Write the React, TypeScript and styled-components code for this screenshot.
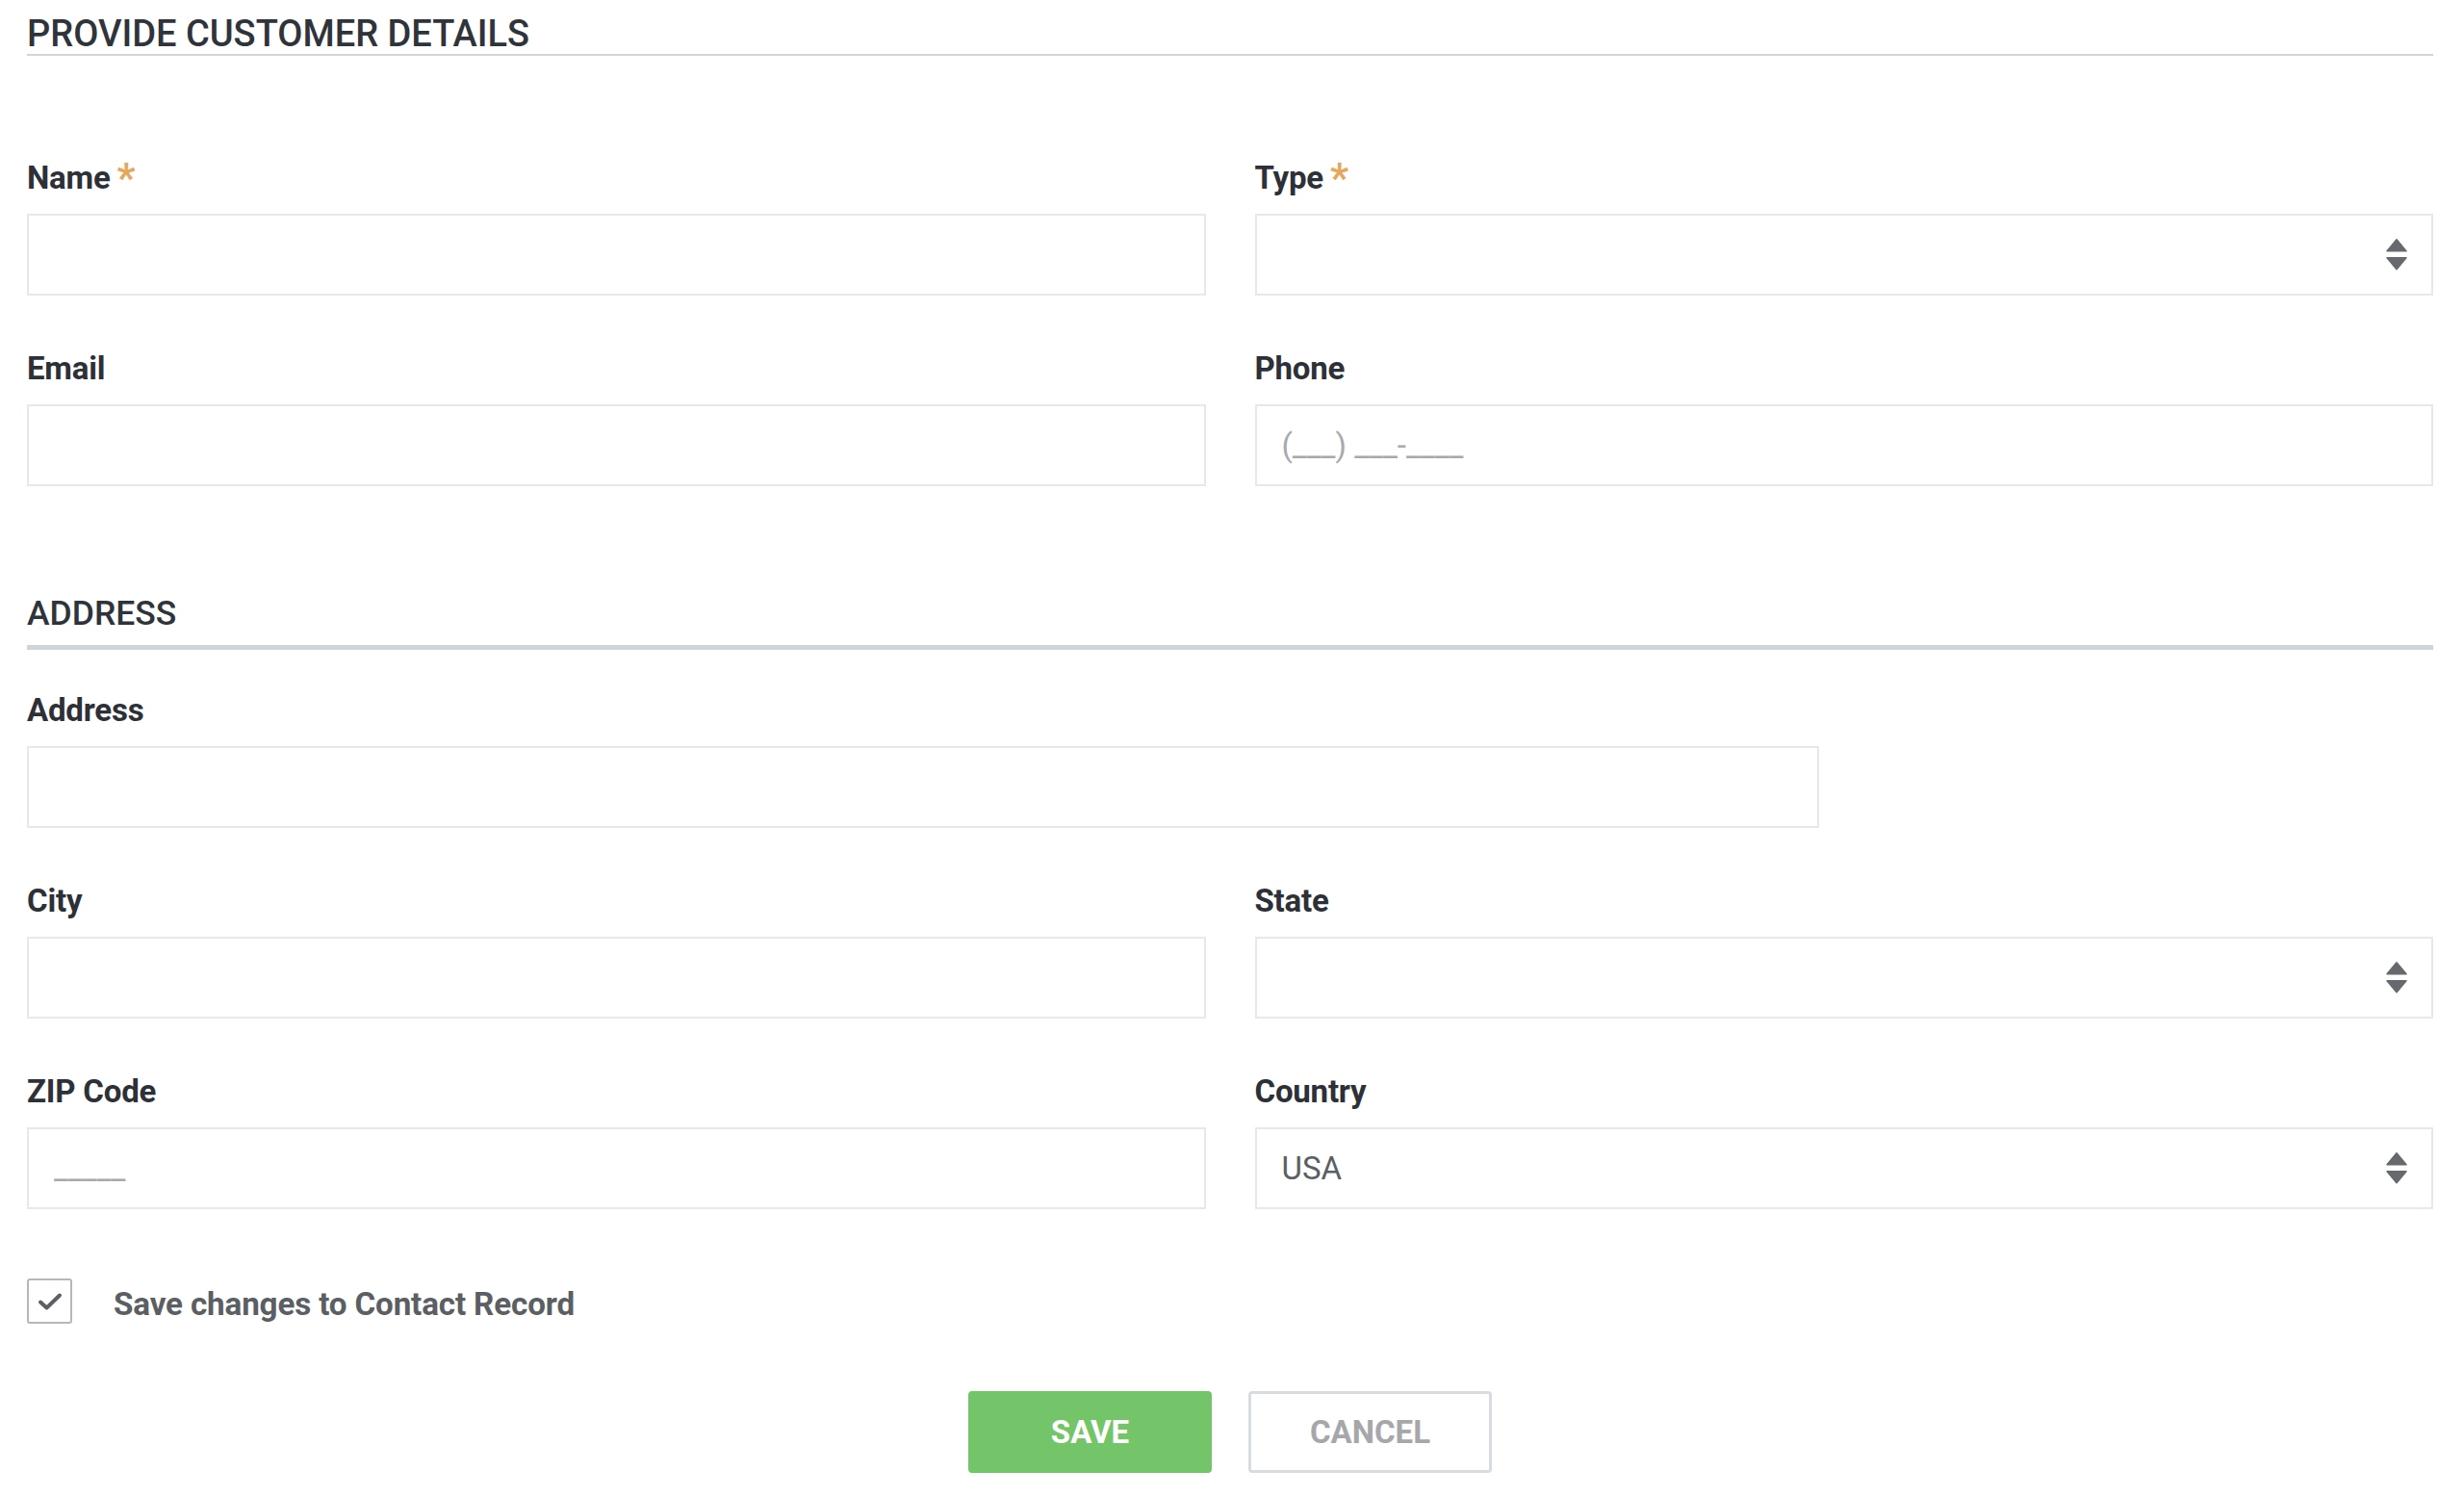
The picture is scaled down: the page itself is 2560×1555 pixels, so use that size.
import React, { useState } from 'react';
import styled, { createGlobalStyle } from 'styled-components';

const GlobalStyle = createGlobalStyle`
    html, body {
        margin: 0;
        padding: 0;
        background: #ffffff;
    }
    body {
        font-family: Roboto, "Liberation Sans", Arial, sans-serif;
        color: #2d3137;
    }
    * {
        box-sizing: border-box;
    }
`;

const Page = styled.div`
    padding: 14px 32px 24px 28px;
`;

const SectionTitle = styled.h2<{ $thick?: boolean; $top?: number }>`
    margin: ${(p) => p.$top || 0}px 0 0 0;
    font-size: ${(p) => (p.$thick ? '35.5px' : '38px')};
    font-weight: 500;
    line-height: 42px;
    color: #2f333a;
    text-transform: uppercase;
    padding-bottom: ${(p) => (p.$thick ? '12px' : '0')};
    border-bottom: ${(p) => (p.$thick ? '5px solid #cdd5db' : '2px solid #d0d7dc')};
`;

const FieldGrid = styled.div<{ $top: number }>`
    display: grid;
    grid-template-columns: repeat(12, 1fr);
    column-gap: 51px;
    row-gap: 56px;
    margin-top: ${(p) => p.$top}px;
`;

const Field = styled.div<{ $span: number }>`
    grid-column: span ${(p) => p.$span};
    display: flex;
    flex-direction: column;
`;

const Label = styled.label`
    font-size: 33px;
    font-weight: 700;
    line-height: 40px;
    color: #2d3137;
    margin-bottom: 17px;
    letter-spacing: -0.2px;
`;

const Required = styled.span`
    color: #e6a75c;
    margin-left: 7px;
    font-size: 42px;
    font-weight: 700;
    line-height: 0;
    position: relative;
    top: 3px;
`;

const TextInput = styled.input`
    height: 85px;
    width: 100%;
    border: 2px solid #e4e9ec;
    border-radius: 0;
    padding: 0 26px;
    font-family: Roboto, "Liberation Sans", Arial, sans-serif;
    font-size: 33px;
    color: #5b5f64;
    outline: none;
    background: #fff;

    &::placeholder {
        color: #a6a9ad;
    }
`;

const SelectWrap = styled.div`
    position: relative;
`;

const Select = styled.select`
    appearance: none;
    -webkit-appearance: none;
    height: 85px;
    width: 100%;
    border: 2px solid #e4e9ec;
    border-radius: 0;
    padding: 0 60px 0 26px;
    font-family: Roboto, "Liberation Sans", Arial, sans-serif;
    font-size: 33px;
    color: #5b5f64;
    background: #fff;
    outline: none;
`;

const Arrows = styled.svg`
    position: absolute;
    right: 27px;
    top: 50%;
    transform: translateY(-52%);
    pointer-events: none;
`;

const CheckRow = styled.label`
    display: flex;
    align-items: center;
    gap: 43px;
    margin-top: 72px;
    cursor: pointer;
`;

const CheckBox = styled.span<{ $checked: boolean }>`
    width: 47px;
    height: 47px;
    border: 2px solid #b4b8bc;
    border-radius: 3px;
    display: flex;
    align-items: center;
    justify-content: center;
    background: #fff;

    svg {
        visibility: ${(p) => (p.$checked ? 'visible' : 'hidden')};
    }
`;

const CheckText = styled.span`
    font-size: 33.2px;
    font-weight: 700;
    color: #5b5f64;
    letter-spacing: -0.15px;
    position: relative;
    top: 3px;
`;

const ButtonRow = styled.div`
    display: flex;
    justify-content: center;
    gap: 38px;
    margin-top: 70px;
`;

const Button = styled.button<{ $primary?: boolean }>`
    width: 253px;
    height: 85px;
    border-radius: 4px;
    font-family: Roboto, "Liberation Sans", Arial, sans-serif;
    font-size: 33px;
    font-weight: 700;
    text-transform: uppercase;
    cursor: pointer;
    background: ${(p) => (p.$primary ? '#74c56a' : '#ffffff')};
    color: ${(p) => (p.$primary ? '#ffffff' : '#a5a7ab')};
    border: ${(p) => (p.$primary ? '2px solid #74c56a' : '3px solid #d6dce0')};
`;

const SelectArrows: React.FC = () => (
    <Arrows width="22" height="33" viewBox="0 0 22 33">
        <path d="M11 1 L21 13 L1 13 Z" fill="#66696d" strokeLinejoin="round" stroke="#66696d" strokeWidth="1.5" />
        <path d="M1 20 L21 20 L11 32 Z" fill="#66696d" strokeLinejoin="round" stroke="#66696d" strokeWidth="1.5" />
    </Arrows>
);

const App: React.FC = () => {
    const [saveContact, setSaveContact] = useState(true);
    const [country, setCountry] = useState('USA');

    return (
        <Page>
            <GlobalStyle />
            <SectionTitle>Provide Customer Details</SectionTitle>

            <FieldGrid $top={107}>
                <Field $span={6}>
                    <Label>
                        Name<Required>*</Required>
                    </Label>
                    <TextInput type="text" />
                </Field>
                <Field $span={6}>
                    <Label>
                        Type<Required>*</Required>
                    </Label>
                    <SelectWrap>
                        <Select defaultValue="">
                            <option value=""></option>
                            <option value="individual">Individual</option>
                            <option value="business">Business</option>
                        </Select>
                        <SelectArrows />
                    </SelectWrap>
                </Field>
                <Field $span={6}>
                    <Label>Email</Label>
                    <TextInput type="email" />
                </Field>
                <Field $span={6}>
                    <Label>Phone</Label>
                    <TextInput type="tel" placeholder="(___) ___-____" />
                </Field>
            </FieldGrid>

            <SectionTitle $thick $top={111}>Address</SectionTitle>

            <FieldGrid $top={43}>
                <Field $span={9}>
                    <Label>Address</Label>
                    <TextInput type="text" />
                </Field>
                <Field $span={3} />
                <Field $span={6}>
                    <Label>City</Label>
                    <TextInput type="text" />
                </Field>
                <Field $span={6}>
                    <Label>State</Label>
                    <SelectWrap>
                        <Select defaultValue="">
                            <option value=""></option>
                            <option value="CA">California</option>
                            <option value="NY">New York</option>
                            <option value="TX">Texas</option>
                        </Select>
                        <SelectArrows />
                    </SelectWrap>
                </Field>
                <Field $span={6}>
                    <Label>ZIP Code</Label>
                    <TextInput type="text" placeholder="_____" />
                </Field>
                <Field $span={6}>
                    <Label>Country</Label>
                    <SelectWrap>
                        <Select value={country} onChange={(e) => setCountry(e.target.value)}>
                            <option value="USA">USA</option>
                            <option value="Canada">Canada</option>
                            <option value="Mexico">Mexico</option>
                        </Select>
                        <SelectArrows />
                    </SelectWrap>
                </Field>
            </FieldGrid>

            <CheckRow onClick={() => setSaveContact(!saveContact)}>
                <CheckBox $checked={saveContact}>
                    <svg width="26" height="20" viewBox="0 0 26 20">
                        <path
                            d="M3 10.5 L9.5 16.5 L23 3.5"
                            fill="none"
                            stroke="#5c5f63"
                            strokeWidth="4"
                            strokeLinecap="round"
                            strokeLinejoin="round"
                        />
                    </svg>
                </CheckBox>
                <CheckText>Save changes to Contact Record</CheckText>
            </CheckRow>

            <ButtonRow>
                <Button $primary type="button">Save</Button>
                <Button type="button">Cancel</Button>
            </ButtonRow>
        </Page>
    );
};

export default App;
